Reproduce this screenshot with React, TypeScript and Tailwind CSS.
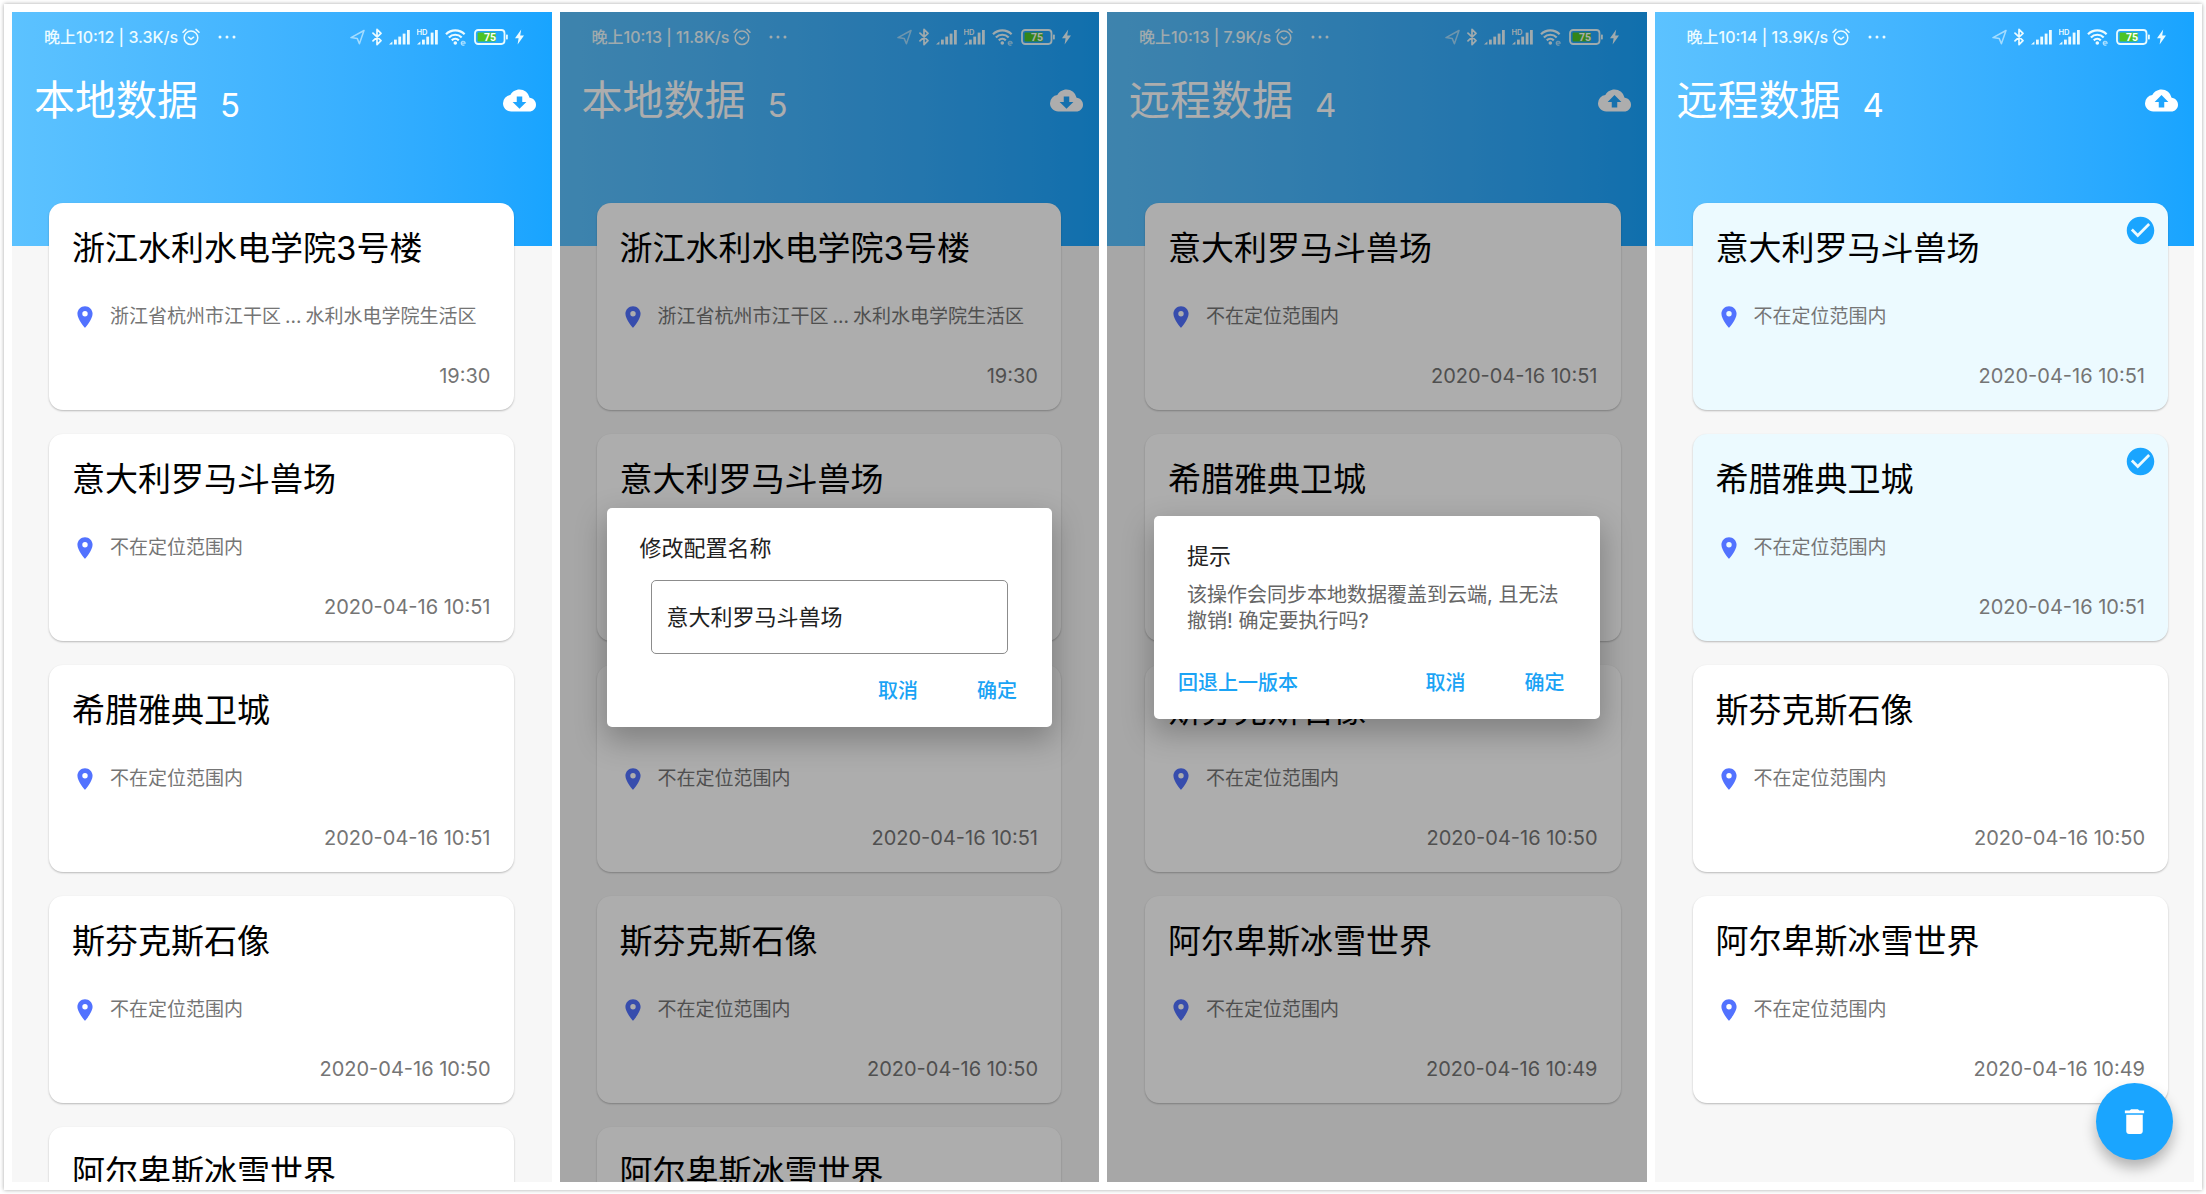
import { useState } from 'react';
import type { ReactNode } from 'react';
import { MdCheckCircle, MdCloudDownload, MdCloudUpload, MdDelete, MdPlace } from 'react-icons/md';

type Place = { name: string; location: string; locationEnd?: string; time: string };

const OUT_OF_RANGE = '不在定位范围内';

const colosseum: Place = { name: '意大利罗马斗兽场', location: OUT_OF_RANGE, time: '2020-04-16 10:51' };
const athens: Place = { name: '希腊雅典卫城', location: OUT_OF_RANGE, time: '2020-04-16 10:51' };
const sphinx: Place = { name: '斯芬克斯石像', location: OUT_OF_RANGE, time: '2020-04-16 10:50' };
const alps: Place = { name: '阿尔卑斯冰雪世界', location: OUT_OF_RANGE, time: '2020-04-16 10:49' };
const campus: Place = {
  name: '浙江水利水电学院3号楼',
  location: '浙江省杭州市江干区',
  locationEnd: '水利水电学院生活区',
  time: '19:30',
};

const localPlaces = [campus, colosseum, athens, sphinx, alps];
const remotePlaces = [colosseum, athens, sphinx, alps];

function AlarmIcon() {
  return (
    <svg width="18" height="18" viewBox="0 0 18 18" fill="none" stroke="currentColor" strokeWidth="1.5" strokeLinecap="round" aria-hidden="true">
      <circle cx="9" cy="9.8" r="6.8" />
      <path d="M1 4.2 4 1.4M17 4.2 14 1.4" />
      <path d="m6.4 9.2 2.6 2 2.6-2" strokeLinejoin="round" />
    </svg>
  );
}

function SendIcon() {
  return (
    <svg width="15" height="16" viewBox="0 0 15 16" fill="none" stroke="currentColor" strokeWidth="1.5" strokeLinejoin="round" className="opacity-60" aria-hidden="true">
      <path d="M14 1.5 1 8.6l6.2.8 2.2 5.4z" />
    </svg>
  );
}

function BluetoothIcon() {
  return (
    <svg width="10" height="18" viewBox="0 0 10 18" fill="none" stroke="currentColor" strokeWidth="1.7" strokeLinejoin="round" strokeLinecap="round" aria-hidden="true">
      <path d="M1 5.2 9 12.6 5 16.6V1.4l4 4-8 7.4" />
    </svg>
  );
}

function SignalIcon({ hd }: { hd?: boolean }) {
  return (
    <svg width="21" height="18" viewBox="0 0 21 18" fill="currentColor" aria-hidden="true">
      <path d="M0 16.5 3.4 13.6V16.5z" />
      <rect x="5" y="11.6" width="2.8" height="4.9" />
      <rect x="9.3" y="8.6" width="2.8" height="7.9" />
      <rect x="13.7" y={hd ? 4.6 : 5.6} width="2.8" height={hd ? 11.9 : 10.9} />
      <rect x="18" y="2" width="2.8" height="14.5" />
      {hd && (
        <text x="-0.5" y="7" fontSize="7.5" fontWeight="600" fontFamily="Inter, sans-serif">
          HD
        </text>
      )}
    </svg>
  );
}

function WifiIcon() {
  return (
    <svg width="22" height="18" viewBox="0 0 22 18" fill="none" stroke="currentColor" strokeWidth="2.2" aria-hidden="true">
      <path d="M1 6.2a13.2 13.2 0 0 1 18.6 0M3.9 9.4a9 9 0 0 1 12.8 0M6.8 12.4a5 5 0 0 1 7 0" />
      <circle cx="10.3" cy="15" r="1.8" fill="currentColor" stroke="none" />
      <path d="M16.2 15.1h4a2 2 0 1 0-.8 1.7" strokeWidth="1.1" opacity=".7" />
    </svg>
  );
}

function BatteryIcon() {
  return (
    <svg width="34" height="16" viewBox="0 0 34 16" aria-hidden="true">
      <rect x="1" y="1" width="29.5" height="14" rx="3.2" fill="none" stroke="#e9fbff" strokeWidth="1.8" />
      <rect x="3.6" y="3.4" width="18" height="9.2" rx="1" fill="#4cc425" />
      <rect x="32" y="5.6" width="1.8" height="4.8" rx=".6" fill="#e9fbff" />
      <text x="16" y="11.9" textAnchor="middle" fontSize="10.5" fontWeight="700" fill="#fff" fontFamily="Roboto, sans-serif">
        75
      </text>
    </svg>
  );
}

function BoltIcon() {
  return (
    <svg width="9" height="16" viewBox="0 0 9 16" fill="currentColor" aria-hidden="true">
      <path d="M6.2.4 0 9.2h3.6L2.6 15.6 9 6.6H5.2z" />
    </svg>
  );
}

function StatusBar({ clock, speed }: { clock: string; speed: string }) {
  return (
    <div className="flex h-[50px] items-center justify-between pr-7 pl-8 text-[#ecfbff]">
      <div className="flex items-center gap-1">
        <span className="text-[16px] leading-6 font-medium whitespace-nowrap">
          {clock} | {speed}
        </span>
        <AlarmIcon />
        <svg width="18" height="4" viewBox="0 0 18 4" fill="currentColor" className="ml-[14px]" aria-hidden="true">
          <circle cx="2" cy="2" r="1.5" />
          <circle cx="9" cy="2" r="1.5" />
          <circle cx="16" cy="2" r="1.5" />
        </svg>
      </div>
      <div className="flex items-center gap-[7px]">
        <SendIcon />
        <BluetoothIcon />
        <SignalIcon />
        <SignalIcon hd />
        <WifiIcon />
        <BatteryIcon />
        <BoltIcon />
      </div>
    </div>
  );
}

function PlaceContent({ place }: { place: Place }) {
  return (
    <>
      <h2 className="text-[33px] leading-[50px] whitespace-nowrap text-black">{place.name}</h2>
      <p className="mt-7 flex items-center text-[19px] leading-8 whitespace-nowrap text-[#757575]">
        <MdPlace size={26} className="mr-3 shrink-0 text-[#5272ff]" aria-hidden="true" />
        {place.location}
        {place.locationEnd && (
          <>
            <span className="px-1">...</span>
            {place.locationEnd}
          </>
        )}
      </p>
      <time className="mt-7 block text-right text-[20px] leading-[30px] text-[#757575]">{place.time}</time>
    </>
  );
}

const cardShape = 'relative block h-[207px] w-full rounded-[14px] pt-5 pr-[23px] pl-[23px] shadow-[0_1px_2px_rgba(0,0,0,0.25)]';

function PlaceCard({ place }: { place: Place }) {
  return (
    <article className={`${cardShape} bg-white`}>
      <PlaceContent place={place} />
    </article>
  );
}

function SelectableCard({ place, initial }: { place: Place; initial: boolean }) {
  const [checked, setChecked] = useState(initial);
  return (
    <label className={`${cardShape} cursor-pointer ${checked ? 'bg-[#ecfaff]' : 'bg-white'}`}>
      <input type="checkbox" className="sr-only" checked={checked} onChange={() => setChecked(!checked)} />
      {checked && <MdCheckCircle size={33} className="absolute top-[11px] right-[11px] text-[#1aa5ff]" aria-hidden="true" />}
      <PlaceContent place={place} />
    </label>
  );
}

type PhoneProps = {
  clock: string;
  speed: string;
  title: string;
  remote?: boolean;
  places: Place[];
  selected?: string[];
  dialog?: ReactNode;
  action?: ReactNode;
};

function Phone({ clock, speed, title, remote, places, selected, dialog, action }: PhoneProps) {
  const Cloud = remote ? MdCloudUpload : MdCloudDownload;
  return (
    <section className="relative min-w-0 overflow-hidden bg-[#f7f7f7]">
      <header className="h-[234px] bg-linear-to-r from-[#5cc2ff] to-[#18a4ff] text-white">
        <StatusBar clock={clock} speed={speed} />
        <div className="flex items-center justify-between pr-4 pl-[22px]">
          <h1 className="flex items-center gap-[22px] text-[41px] leading-[77px]">
            {title}
            <span className="pt-2 text-[33px] leading-10">{places.length}</span>
          </h1>
          <button type="button" aria-label={remote ? '上传' : '下载'}>
            <Cloud size={33} />
          </button>
        </div>
      </header>
      <ul className={`relative -mt-[43px] flex flex-col gap-6 ${remote ? 'pr-[26px] pl-[38px]' : 'pr-[38px] pl-[37px]'}`}>
        {places.map((place) => (
          <li key={place.name}>
            {selected ? <SelectableCard place={place} initial={selected.includes(place.name)} /> : <PlaceCard place={place} />}
          </li>
        ))}
      </ul>
      {dialog && (
        <div className="absolute inset-0 flex items-center justify-center bg-black/32 px-[47px] pt-10">{dialog}</div>
      )}
      {action}
    </section>
  );
}

const dialogShape = 'w-full rounded-[5px] bg-white shadow-[0_12px_30px_2px_rgba(0,0,0,0.26)]';
const dialogButton = 'px-2 text-[20px] leading-10 font-medium text-[#1aa3f5]';

function RenameDialog() {
  return (
    <form role="dialog" aria-labelledby="rename-title" className={`${dialogShape} pt-6 pb-4`} onSubmit={(e) => e.preventDefault()}>
      <label id="rename-title" htmlFor="rename-input" className="block px-[33px] text-[22px] leading-8 text-[#212121]">
        修改配置名称
      </label>
      <div className="mt-4 px-11">
        <input
          id="rename-input"
          type="text"
          defaultValue="意大利罗马斗兽场"
          className="block h-[74px] w-full rounded-[5px] border border-[#8c8c8c] px-[15px] pb-1 text-[22px] text-[#212121] outline-none"
        />
      </div>
      <div className="mt-[17px] flex justify-end gap-[43px] pr-[27px]">
        <button type="button" className={dialogButton}>取消</button>
        <button type="submit" className={dialogButton}>确定</button>
      </div>
    </form>
  );
}

function SyncDialog() {
  return (
    <div role="dialog" aria-labelledby="sync-title" className={`${dialogShape} pt-6 pb-4`}>
      <h2 id="sync-title" className="px-[33px] text-[22px] leading-8 text-[#212121]">提示</h2>
      <p className="mt-[10px] px-[33px] text-[20px] leading-[26px] text-[#666]">
        该操作会同步本地数据覆盖到云端, 且无法撤销! 确定要执行吗?
      </p>
      <div className="mt-[29px] flex gap-[43px] pr-[27px] pl-4">
        <button type="button" className={`${dialogButton} mr-auto`}>回退上一版本</button>
        <button type="button" className={dialogButton}>取消</button>
        <button type="button" className={dialogButton}>确定</button>
      </div>
    </div>
  );
}

export default function App() {
  return (
    <div className="h-screen bg-white p-1 font-[Inter,'Noto_Sans_CJK_SC',sans-serif]" lang="zh-CN">
      <main className="grid h-full grid-cols-4 gap-2 bg-white p-2 shadow-[0_0_4px_rgba(0,0,0,0.35)]">
        <Phone clock="晚上10:12" speed="3.3K/s" title="本地数据" places={localPlaces} />
        <Phone clock="晚上10:13" speed="11.8K/s" title="本地数据" places={localPlaces} dialog={<RenameDialog />} />
        <Phone clock="晚上10:13" speed="7.9K/s" title="远程数据" remote places={remotePlaces} dialog={<SyncDialog />} />
        <Phone
          clock="晚上10:14"
          speed="13.9K/s"
          title="远程数据"
          remote
          places={remotePlaces}
          selected={[colosseum.name, athens.name]}
          action={
            <button
              type="button"
              aria-label="删除"
              className="absolute right-[21px] bottom-[22px] flex size-[77px] items-center justify-center rounded-full bg-[#1aa5ff] text-white shadow-[0_8px_14px_rgba(0,0,0,0.28)]"
            >
              <MdDelete size={33} />
            </button>
          }
        />
      </main>
    </div>
  );
}
